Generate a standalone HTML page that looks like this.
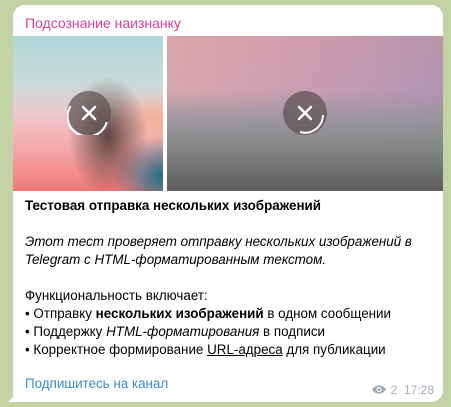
<!DOCTYPE html>
<html><head><meta charset="utf-8"><style>
*{margin:0;padding:0;box-sizing:border-box}
body{width:451px;height:407px;overflow:hidden;background:#c3d3a6;font-family:"Liberation Sans","DejaVu Sans",sans-serif;position:relative}
.b{position:absolute;left:13px;top:5px;width:430px;height:397px;background:#fff;border-radius:12px 12px 12px 0}
.tail{position:absolute;left:8px;top:394px;width:8px;height:8px;background:#fff;clip-path:polygon(100% 0,100% 100%,0 100%)}
.t{position:absolute;left:12px;top:10px;color:#d0458c;font-size:14px}
.i1{position:absolute;left:0;top:31px;width:150px;height:155px;
background:radial-gradient(ellipse 40px 60px at 95px 100px,rgba(70,50,50,.85),transparent),radial-gradient(ellipse 50px 40px at 150px 140px,#1d6f8c,transparent),radial-gradient(ellipse 60px 30px at 150px 85px,#f3b090,transparent),linear-gradient(#aed6d8 0%,#c9dad8 30%,#ecc8d0 50%,#f5a5a5 75%,#f27876 100%)}
.i2{position:absolute;left:154px;top:31px;width:276px;height:155px;
background:linear-gradient(90deg,#d3a2b4,#b48bb8 60%,#8f7eb8)}
.i2:after{content:"";position:absolute;left:0;right:0;top:0;bottom:0;background:linear-gradient(180deg,rgba(225,170,160,.5) 0%,rgba(220,175,170,.45) 35%,rgba(150,150,155,.9) 55%,#858786 72%,#5c5c5c 100%)}
.c{position:absolute;width:44px;height:44px;border-radius:50%;background:rgba(90,80,80,.7);z-index:2}
.txt{position:absolute;left:12px;top:192px;font-size:13.4px;line-height:18px;color:#000;width:418px}
.ln{position:absolute;left:12px;top:371px;color:#3a8cd0;font-size:13.4px}
.tm{position:absolute;right:9px;top:378px;color:#a0acb6;font-size:12px}
</style></head><body>
<div class="b">
<div class="t">Подсознание наизнанку</div>
<div class="i1"></div><div class="i2"></div>
<div class="c" style="left:54px;top:86px"><svg width="44" height="44"><path d="M16 16L28 28M28 16L16 28" stroke="#fff" stroke-width="2.5" stroke-linecap="round"/><path d="M5 12A20 20 0 1 0 38 34" fill="none" stroke="#fff" stroke-width="2" transform="rotate(-10 22 22)"/></svg></div>
<div class="c" style="left:270px;top:86px"><svg width="44" height="44"><path d="M16 16L28 28M28 16L16 28" stroke="#fff" stroke-width="2.5" stroke-linecap="round"/><path d="M40 24A18 18 0 0 1 17 41" fill="none" stroke="#fff" stroke-width="2"/></svg></div>
<div class="txt"><b>Тестовая отправка нескольких изображений</b><br><br><i>Этот тест проверяет отправку нескольких изображений в Telegram с HTML-форматированным текстом.</i><br><br>Функциональность включает:<br>• Отправку <b>нескольких изображений</b> в одном сообщении<br>• Поддержку <i>HTML-форматирования</i> в подписи<br>• Корректное формирование <u>URL-адреса</u> для публикации</div>
<div class="ln">Подпишитесь на канал</div>
<div class="tm"><svg width="16" height="11" style="vertical-align:-1px"><path d="M1 5.5C4 0 12 0 15 5.5C12 11 4 11 1 5.5Z" fill="#a0acb6"/><circle cx="8" cy="5.5" r="2.6" fill="#fff"/><circle cx="8" cy="5.5" r="1.5" fill="#a0acb6"/></svg> 2&nbsp;&nbsp;17:28</div>
</div>
<div class="tail"></div>
</body></html>
